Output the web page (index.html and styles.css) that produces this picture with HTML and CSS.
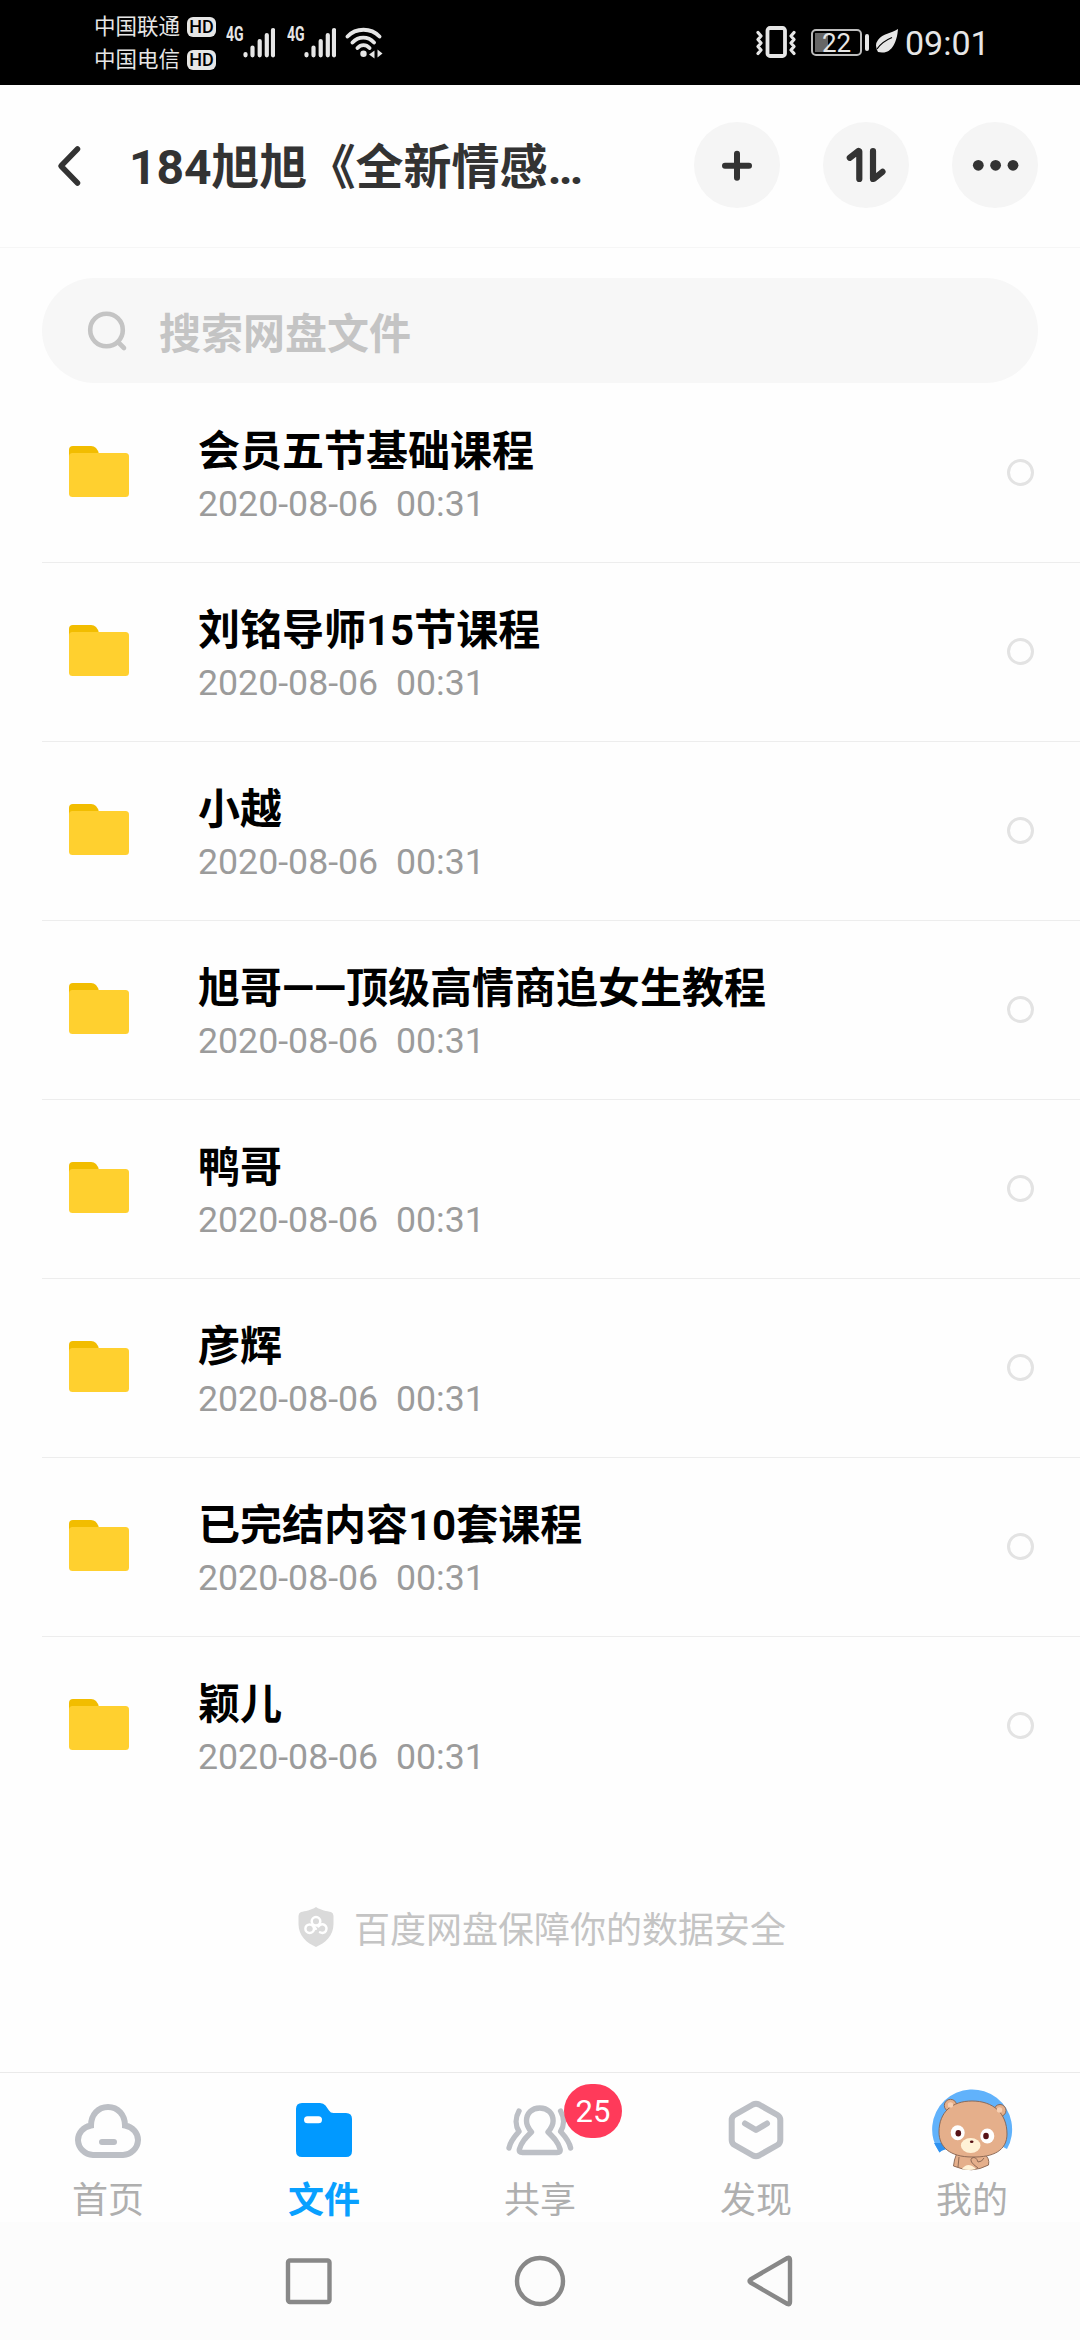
FILE: index.html
```html
<!DOCTYPE html>
<html lang="zh-CN">
<head>
<meta charset="utf-8">
<title>网盘文件</title>
<link rel="stylesheet" href="styles.css">
</head>
<body>
<div class="screen">
  <div class="status">
    <div class="carriers">
      <div class="carrier"><span>中国联通</span><b class="hd">HD</b></div>
      <div class="carrier"><span>中国电信</span><b class="hd">HD</b></div>
    </div>
    <div class="signal"><span class="gen">4G</span>
      <svg width="32" height="31" viewBox="0 0 32 31" stroke="#e6e6e6" stroke-width="4.2" stroke-linecap="round"><path d="M2.5 27v1.3M9.5 20.5v7.8M16.7 14v14.3M23.8 8v20.3M30 3v25.3"/></svg>
    </div>
    <div class="signal"><span class="gen">4G</span>
      <svg width="32" height="31" viewBox="0 0 32 31" stroke="#e6e6e6" stroke-width="4.2" stroke-linecap="round"><path d="M2.5 27v1.3M9.5 20.5v7.8M16.7 14v14.3M23.8 8v20.3M30 3v25.3"/></svg>
    </div>
    <svg class="wifi" width="38" height="32" viewBox="0 0 38 32" fill="none" stroke="#e6e6e6" stroke-width="3.8" stroke-linecap="round"><path d="M2.5 9.500C11 .500 26 .500 34.500 9.500M7.500 15.500C13.500 9 23 9 29 15.500M12.500 21C16 17.200 21 17.200 24.500 21"/><circle cx="18.500" cy="26.800" r="3.200" fill="#e6e6e6" stroke="none"/><path d="M24 27.500l5.500-4v8zM37.500 26.500l-5-4v8z" fill="#e6e6e6" stroke="none"/></svg>
    <svg class="vibrate" width="42" height="34" viewBox="0 0 42 34" fill="none" stroke="#e6e6e6" stroke-width="3.800" stroke-linejoin="round" stroke-linecap="round"><rect x="11.500" y="3" width="17.500" height="28" rx="2.500"/><path d="M2 7.500l3 3.500-3 3.500 3 3.500-3 3.500 3 3.500-3 3.500M38 7.500l-3 3.500 3 3.500-3 3.500 3 3.500-3 3.500 3 3.500" stroke-width="3.200"/></svg>
    <div class="battery"><span>22</span></div>
    <i class="nub"></i>
    <svg class="leaf" width="24" height="26" viewBox="0 0 24 26"><path d="M23 1C22 14 17 25 7 24.500L3 24Q-1 17 3 12C8 5 16 6 23 1Z" fill="#e6e6e6"/><path d="M2 21C6 15 11 12 17 9.500" fill="none" stroke="#000" stroke-width="1.300"/></svg>
    <span class="clock">09:01</span>
  </div>

  <header class="header">
    <svg class="back" width="26" height="44" viewBox="0 0 26 44" fill="none" stroke="#333" stroke-width="5.500" stroke-linecap="round" stroke-linejoin="round"><path d="M21.500 5L5 22l16.500 17"/></svg>
    <h1 class="title">184旭旭《全新情感…</h1>
    <div class="actions">
      <svg class="round" viewBox="0 0 86 86" fill="none" stroke="#333" stroke-width="6" stroke-linecap="round"><path d="M31 43.700h24M43 31.700v24"/></svg>
      <svg class="round" viewBox="0 0 86 86" fill="none" stroke="#333" stroke-width="6.200" stroke-linecap="round" stroke-linejoin="round"><path d="M26.800 35.800L35.500 29l.800.500V57M50 29v28l.800-.200 8.700-7"/></svg>
      <svg class="round" viewBox="0 0 86 86" fill="#333"><circle cx="26.300" cy="43.300" r="5.400"/><circle cx="43.600" cy="43.300" r="5.400"/><circle cx="61" cy="43.300" r="5.400"/></svg>
    </div>
  </header>

  <div class="search">
    <svg width="42" height="42" viewBox="0 0 42 42" fill="none" stroke="#c4c4c4" stroke-width="4.600" stroke-linecap="round"><circle cx="19.500" cy="20" r="16.300"/><path d="M31.500 32.500l5.500 5.500"/></svg>
    <span>搜索网盘文件</span>
  </div>

  <main class="list">
    <div class="row"><svg class="folder" viewBox="0 0 60 51"><path d="M0 12V4Q0 0 4 0H22Q28 0 30 8V12Z" fill="#f2bd00"/><rect y="7" width="60" height="44" rx="3.500" fill="#ffd02f"/></svg><div class="info"><div class="name">会员五节基础课程</div><div class="date">2020-08-06  00:31</div></div><i class="radio"></i></div>
    <div class="row"><svg class="folder" viewBox="0 0 60 51"><path d="M0 12V4Q0 0 4 0H22Q28 0 30 8V12Z" fill="#f2bd00"/><rect y="7" width="60" height="44" rx="3.500" fill="#ffd02f"/></svg><div class="info"><div class="name">刘铭导师15节课程</div><div class="date">2020-08-06  00:31</div></div><i class="radio"></i></div>
    <div class="row"><svg class="folder" viewBox="0 0 60 51"><path d="M0 12V4Q0 0 4 0H22Q28 0 30 8V12Z" fill="#f2bd00"/><rect y="7" width="60" height="44" rx="3.500" fill="#ffd02f"/></svg><div class="info"><div class="name">小越</div><div class="date">2020-08-06  00:31</div></div><i class="radio"></i></div>
    <div class="row"><svg class="folder" viewBox="0 0 60 51"><path d="M0 12V4Q0 0 4 0H22Q28 0 30 8V12Z" fill="#f2bd00"/><rect y="7" width="60" height="44" rx="3.500" fill="#ffd02f"/></svg><div class="info"><div class="name">旭哥——顶级高情商追女生教程</div><div class="date">2020-08-06  00:31</div></div><i class="radio"></i></div>
    <div class="row"><svg class="folder" viewBox="0 0 60 51"><path d="M0 12V4Q0 0 4 0H22Q28 0 30 8V12Z" fill="#f2bd00"/><rect y="7" width="60" height="44" rx="3.500" fill="#ffd02f"/></svg><div class="info"><div class="name">鸭哥</div><div class="date">2020-08-06  00:31</div></div><i class="radio"></i></div>
    <div class="row"><svg class="folder" viewBox="0 0 60 51"><path d="M0 12V4Q0 0 4 0H22Q28 0 30 8V12Z" fill="#f2bd00"/><rect y="7" width="60" height="44" rx="3.500" fill="#ffd02f"/></svg><div class="info"><div class="name">彦辉</div><div class="date">2020-08-06  00:31</div></div><i class="radio"></i></div>
    <div class="row"><svg class="folder" viewBox="0 0 60 51"><path d="M0 12V4Q0 0 4 0H22Q28 0 30 8V12Z" fill="#f2bd00"/><rect y="7" width="60" height="44" rx="3.500" fill="#ffd02f"/></svg><div class="info"><div class="name">已完结内容10套课程</div><div class="date">2020-08-06  00:31</div></div><i class="radio"></i></div>
    <div class="row"><svg class="folder" viewBox="0 0 60 51"><path d="M0 12V4Q0 0 4 0H22Q28 0 30 8V12Z" fill="#f2bd00"/><rect y="7" width="60" height="44" rx="3.500" fill="#ffd02f"/></svg><div class="info"><div class="name">颖儿</div><div class="date">2020-08-06  00:31</div></div><i class="radio"></i></div>
    <div class="safety">
      <svg width="36" height="40" viewBox="0 0 36 40"><path d="M18 0C23 3.500 29 4 33 5Q35.500 6 35.500 9V17C35.500 29 27 36 18 40C9 36 .500 29 .500 17V9Q.500 6 3 5C7 4 13 3.500 18 0Z" fill="#dadada"/><g fill="none" stroke="#fff" stroke-width="2.500" stroke-linecap="round"><circle cx="18" cy="14.300" r="4.300"/><circle cx="11.700" cy="21.700" r="4.300"/><path d="M20.500 19.500A4.300 4.300 0 1 1 22 25.300M14.800 18.800L17.800 21.800"/></g></svg>
      <span>百度网盘保障你的数据安全</span>
    </div>
  </main>

  <nav class="tabs">
    <div class="tab"><svg viewBox="0 0 90 90" fill="none" stroke="#bcbfc5" stroke-width="6" stroke-linecap="round"><path d="M28 42.500C28 32 35 24 45 24S62 32 62 42.500C70 44 75 50 75 57A15.500 15.500 0 0 1 60 72H30A15.500 15.500 0 0 1 15 57C15 50 20 44 28 42.500ZM39 59H51"/></svg><span>首页</span></div>
    <div class="tab active"><svg viewBox="0 0 90 90"><path d="M23 20H41Q44.500 20 46.500 22.500L50 27.500Q51.500 30 54.500 30H67Q73 30 73 36V68Q73 74 67 74H23Q17 74 17 68V26Q17 20 23 20Z" fill="#0199ff"/><rect x="25" y="33.300" width="18" height="7" rx="3.500" fill="#fff"/></svg><span>文件</span></div>
    <div class="tab"><svg viewBox="0 0 90 90" fill="none" stroke="#bcbfc5" stroke-width="5.400" stroke-linecap="round" stroke-linejoin="round"><path d="M36.500 49C33 45 31.500 42 31.500 38C31.500 30 37 25 44.800 25S58.100 30 58.100 38C58.100 42 56.500 45 53 49C59 55 63 59 65 66Q66 69.500 62 69.500H27.500Q23.500 69.500 24.500 66C26.500 59 30.500 55 36.500 49ZM24 28C20 35 20.500 43 24 48.500C19 54 15 60 14 65M65.600 28C69.600 35 69.100 43 65.600 48.500C70.600 54 74.600 60 75.600 65"/></svg><span>共享</span><b class="badge">25</b></div>
    <div class="tab"><svg viewBox="0 0 90 90" fill="none" stroke="#bcbfc5" stroke-width="6" stroke-linecap="round" stroke-linejoin="round"><path d="M42 21.500Q45 20 48 21.500L66.500 32Q69.300 33.600 69.300 37V57Q69.300 60.400 66.500 62L48 72.500Q45 74 42 72.500L23.500 62Q20.700 60.400 20.700 57V37Q20.700 33.600 23.500 32ZM34 40.500L45 47L56 40.500"/></svg><span>发现</span></div>
    <div class="tab"><svg viewBox="0 0 90 90"><path d="M12.500 69.500A40 40 0 1 1 80 66L76 64H16Z" fill="#61b2fb"/><path d="M12.500 69.500L7 60H20L22 66Q16 66 12.500 69.500Z" fill="#2f92f0"/><g fill="#e5af8b" stroke="#86624f" stroke-width=".900"><path d="M29.500 71Q27 77 26.500 83Q45 91 61.500 82Q63 75 57 71Z"/><circle cx="23.500" cy="22.500" r="6.200"/><circle cx="73" cy="27.500" r="6"/><path d="M45 18C66 18 80 30 80 51C80 67 67 74.500 45 74C23 74 12 64 12 49C12 29 25 18 45 18Z"/><path d="M32 74L31 84M51 85Q41 78 45 75Q49 73 51 79Q55 79 57 75" fill="none"/></g><path d="M35 86Q41 78 49 86Q42 88 35 86Z" fill="#fff2d7"/><circle cx="23.500" cy="22" r="2.700" fill="#f8d0b3"/><circle cx="72.500" cy="27" r="2.700" fill="#f8d0b3"/><ellipse cx="30.700" cy="49.700" rx="7" ry="7.500" fill="#fff"/><ellipse cx="60.300" cy="53" rx="7" ry="7.500" fill="#fff"/><ellipse cx="31.300" cy="50.300" rx="2.800" ry="3.300" fill="#571216"/><ellipse cx="59" cy="53" rx="2.800" ry="3.300" fill="#571216"/><ellipse cx="43.700" cy="62.500" rx="9.800" ry="7.500" fill="#fff2d7"/><ellipse cx="44.700" cy="58.800" rx="1.800" ry="1.200" fill="#571216"/></svg><span>我的</span></div>
  </nav>

  <footer class="sysnav">
    <svg width="54" height="54" viewBox="0 0 54 54"><rect x="6" y="6.500" width="41.500" height="41.500" rx="2"/></svg>
    <svg width="54" height="54" viewBox="0 0 54 54"><circle cx="27" cy="27" r="23"/></svg>
    <svg width="54" height="54" viewBox="0 0 54 54"><path d="M43.500 4Q46 3 46 6V48Q46 51 43.500 50L6.500 28.500Q4.500 27 6.500 25.500Z"/></svg>
  </footer>
</div>
</body>
</html>
```
FILE: styles.css
```css
* { box-sizing: border-box; }
body { margin: 0; background: #fefefe; font-family: Roboto, "Noto Sans CJK SC", sans-serif; }
svg { display: block; flex: none; }
.screen { width: 1080px; height: 2340px; display: flex; flex-direction: column; overflow: hidden; }

.status { height: 85px; flex: none; background: #000; color: #e6e6e6; display: flex; padding-left: 94px; }
.carriers { width: 132px; padding-top: 10px; }
.carrier { height: 33px; display: flex; align-items: center; font-size: 21.5px; line-height: 33px; white-space: nowrap; }
.hd { width: 29px; height: 20px; margin-left: 7px; border-radius: 6px; background: #e6e6e6; color: #000; font-size: 18px; font-weight: 500; line-height: 20px; text-align: center; }
.signal { display: flex; width: 61px; padding-top: 27px; }
.gen { width: 17px; font-size: 20px; font-weight: 700; line-height: 15px; transform: scaleX(.7); transform-origin: left; }
.wifi { margin: 27px 0 0 -3px; }
.vibrate { margin: 25px 0 0 373px; }
.battery { width: 51px; height: 27px; margin: 29px 0 0 13px; border: 2px solid #bdbdbd; border-radius: 5px; background: linear-gradient(90deg, #666 13px, #000 13px) 2px 2px / 43px 19px no-repeat; font-size: 26px; line-height: 24px; text-align: center; }
.nub { width: 4px; height: 17px; margin: 34px 0 0 3px; border-radius: 2px; background: #e6e6e6; }
.leaf { margin: 28px 0 0 6px; }
.clock { margin-left: 6px; font-size: 34px; line-height: 86px; }

.header { height: 163px; flex: none; display: flex; align-items: center; padding: 0 42px 2px 56px; border-bottom: 1px solid #f6f6f6; }
.back { margin-top: 2px; }
.title { flex: 1; margin: 5px 0 0 47px; color: #333; font-size: 48px; font-weight: 700; line-height: 70px; white-space: nowrap; }
.actions { display: flex; gap: 43px; }
.round { width: 86px; height: 86px; border-radius: 50%; background: #f5f5f5; }

.search { height: 105px; flex: none; margin: 30px 42px 1px; padding-left: 45px; border-radius: 53px; background: #f7f7f7; display: flex; align-items: center; gap: 30px; color: #c4c4c4; font-size: 42px; font-weight: 700; }

.list { flex: 1; }
.row { height: 179px; margin-left: 42px; padding: 0 46px 0 27px; display: flex; align-items: flex-start; border-bottom: 1px solid #ededed; }
.row:nth-child(8) { border-color: transparent; }
.folder { width: 60px; height: 51px; margin-top: 62px; }
.info { flex: 1; margin-left: 69px; padding-top: 38px; }
.name { color: #000; font-size: 42px; font-weight: 700; line-height: 60px; white-space: nowrap; }
.date { color: #9b9b9b; font-size: 35.7px; line-height: 45px; white-space: pre; }
.radio { width: 27px; height: 27px; margin-top: 75px; border: 3px solid #e3e3e3; border-radius: 50%; }
.safety { margin-top: 81px; height: 60px; display: flex; align-items: center; padding-left: 298px; gap: 20px; color: #c4c4c4; font-size: 36px; }

.tabs { height: 150px; flex: none; display: flex; border-top: 1px solid #eaeaea; }
.tab { position: relative; width: 216px; padding-top: 10px; display: flex; flex-direction: column; align-items: center; color: #afafaf; font-size: 36px; line-height: 56px; }
.tab svg { width: 90px; height: 90px; }
.active { color: #08a0ff; font-weight: 700; }
.badge { position: absolute; left: 132px; top: 11px; width: 58px; height: 54px; border-radius: 27px; background: #ff3a5a; color: #fff; font-size: 31px; font-weight: 400; line-height: 55px; text-align: center; }

.sysnav { height: 118px; flex: none; background: #fcfcfc; display: flex; padding: 32px 0 0 282px; gap: 177px; }
.sysnav svg { fill: none; stroke: #888; stroke-width: 4.4; stroke-linejoin: round; }
```
